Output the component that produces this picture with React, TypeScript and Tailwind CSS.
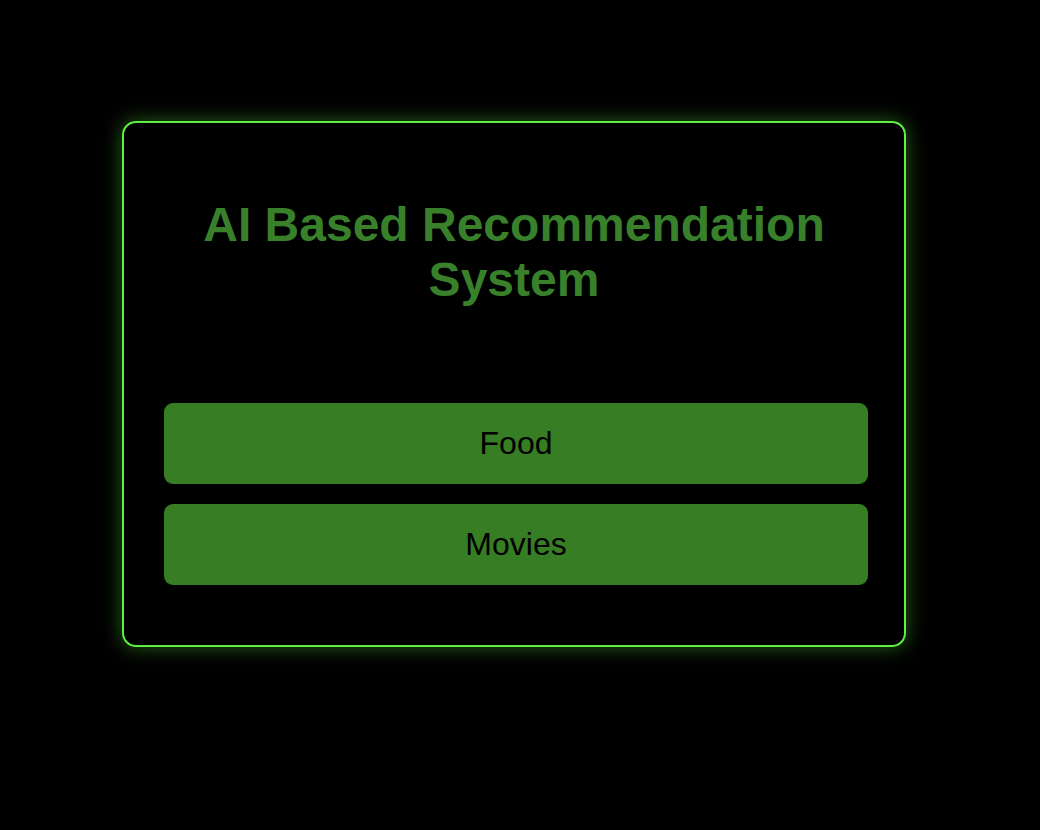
import React from 'react';

const App = () => {
    const options = ["Food", "Movies"];

    return (
        <div className="min-h-screen w-full bg-black pt-[121px] font-['Liberation_Sans',Arial,sans-serif]">
            <div className="ml-[122px] w-[784px] h-[526px] rounded-[14px] border-2 border-[#5ef043] shadow-[0_0_20px_rgba(94,240,67,0.4)]">
                <h1 className="mt-[74px] text-center text-[48px] leading-[55px] font-bold text-[#38802a]">
                    AI Based Recommendation
                    <br />
                    System
                </h1>
                <div className="mt-[96px] ml-[40px] w-[704px] flex flex-col gap-[20px]">
                    {options.map((opt) => (
                        <button
                            key={opt}
                            className="h-[81px] w-full rounded-[9px] bg-[#377d23] pb-[2px] text-[32px] text-black flex items-center justify-center"
                        >
                            {opt}
                        </button>
                    ))}
                </div>
            </div>
        </div>
    );
};

export default App;
